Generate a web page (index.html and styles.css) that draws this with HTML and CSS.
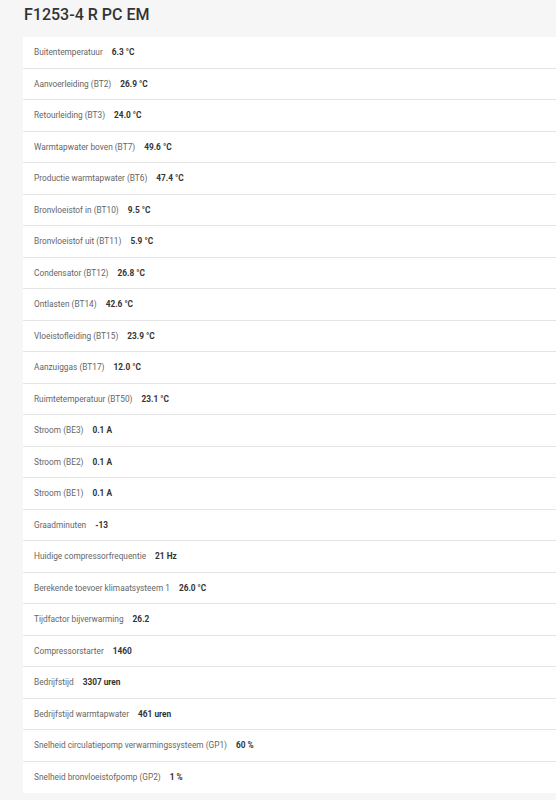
FILE: index.html
```html
<!DOCTYPE html>
<html>
<head>
<meta charset="utf-8">
<link rel="stylesheet" href="styles.css">
</head>
<body>
<h1 class="title">F1253-4 R PC EM</h1>
<div class="card">
  <div class="row"><span class="label">Buitentemperatuur</span><span class="value">6.3 °C</span></div>
  <div class="row"><span class="label">Aanvoerleiding (BT2)</span><span class="value">26.9 °C</span></div>
  <div class="row"><span class="label">Retourleiding (BT3)</span><span class="value">24.0 °C</span></div>
  <div class="row"><span class="label">Warmtapwater boven (BT7)</span><span class="value">49.6 °C</span></div>
  <div class="row"><span class="label">Productie warmtapwater (BT6)</span><span class="value">47.4 °C</span></div>
  <div class="row"><span class="label">Bronvloeistof in (BT10)</span><span class="value">9.5 °C</span></div>
  <div class="row"><span class="label">Bronvloeistof uit (BT11)</span><span class="value">5.9 °C</span></div>
  <div class="row"><span class="label">Condensator (BT12)</span><span class="value">26.8 °C</span></div>
  <div class="row"><span class="label">Ontlasten (BT14)</span><span class="value">42.6 °C</span></div>
  <div class="row"><span class="label">Vloeistofleiding (BT15)</span><span class="value">23.9 °C</span></div>
  <div class="row"><span class="label">Aanzuiggas (BT17)</span><span class="value">12.0 °C</span></div>
  <div class="row"><span class="label">Ruimtetemperatuur (BT50)</span><span class="value">23.1 °C</span></div>
  <div class="row"><span class="label">Stroom (BE3)</span><span class="value">0.1 A</span></div>
  <div class="row"><span class="label">Stroom (BE2)</span><span class="value">0.1 A</span></div>
  <div class="row"><span class="label">Stroom (BE1)</span><span class="value">0.1 A</span></div>
  <div class="row"><span class="label">Graadminuten</span><span class="value">-13</span></div>
  <div class="row"><span class="label">Huidige compressorfrequentie</span><span class="value">21 Hz</span></div>
  <div class="row"><span class="label">Berekende toevoer klimaatsysteem 1</span><span class="value">26.0 °C</span></div>
  <div class="row"><span class="label">Tijdfactor bijverwarming</span><span class="value">26.2</span></div>
  <div class="row"><span class="label">Compressorstarter</span><span class="value">1460</span></div>
  <div class="row"><span class="label">Bedrijfstijd</span><span class="value">3307 uren</span></div>
  <div class="row"><span class="label">Bedrijfstijd warmtapwater</span><span class="value">461 uren</span></div>
  <div class="row"><span class="label">Snelheid circulatiepomp verwarmingssysteem (GP1)</span><span class="value">60 %</span></div>
  <div class="row"><span class="label">Snelheid bronvloeistofpomp (GP2)</span><span class="value">1 %</span></div>
</div>
</body>
</html>
```
FILE: styles.css
```css
html, body {
  margin: 0;
  padding: 0;
  background: #f6f6f6;
  font-family: Roboto, "Liberation Sans", sans-serif;
  overflow: hidden;
}
body {
  padding: 0 0 0 23px;
}
.title {
  margin: 0;
  padding: 7px 0 0 1px;
  height: 30px;
  box-sizing: border-box;
  font-size: 16px;
  font-weight: 500;
  color: #333;
  line-height: 16px;
}
.card {
  margin-top: 7px;
  width: 560px;
  background: #fff;
}
.row {
  display: flex;
  align-items: center;
  gap: 9px;
  height: 31.5px;
  box-sizing: border-box;
  padding-left: 11px;
  border-bottom: 1px solid #e4e4e4;
  font-size: 8.3px;
}
.row:last-child {
  border-bottom: none;
}
.label {
  color: #666;
}
.value {
  color: #333;
  font-weight: 700;
}
```
